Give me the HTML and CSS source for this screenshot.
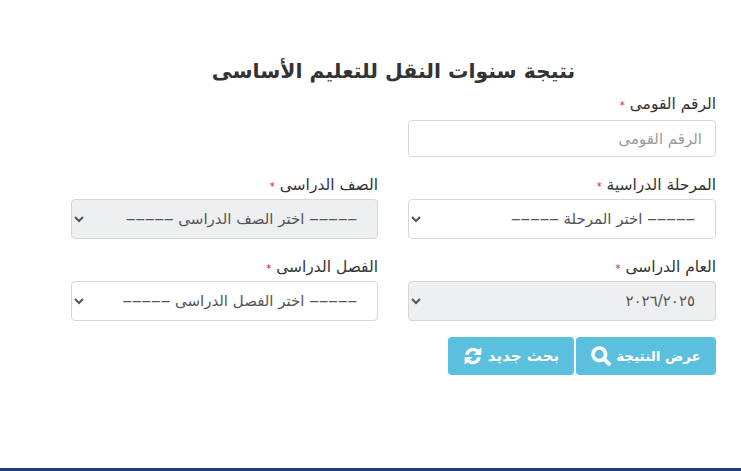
FILE: index.html
```html
<!DOCTYPE html>
<html lang="ar" dir="rtl">
<head>
<meta charset="utf-8">
<title>نتيجة سنوات النقل للتعليم الأساسى</title>
<link rel="stylesheet" href="styles.css">
</head>
<body>
<main class="page">
  <h1 class="title">نتيجة سنوات النقل للتعليم الأساسى</h1>
  <form class="form">
    <div class="field field-wide">
      <label class="label">الرقم القومى <span class="req">*</span></label>
      <input class="control input" type="text" placeholder="الرقم القومى">
    </div>
    <div class="field">
      <label class="label">المرحلة الدراسية <span class="req">*</span></label>
      <select class="control select"><option>‒‒‒‒‒ اختر المرحلة ‒‒‒‒‒</option></select>
    </div>
    <div class="field">
      <label class="label">الصف الدراسى <span class="req">*</span></label>
      <select class="control select" disabled><option>‒‒‒‒‒ اختر الصف الدراسى ‒‒‒‒‒</option></select>
    </div>
    <div class="field">
      <label class="label">العام الدراسى <span class="req">*</span></label>
      <select class="control select" disabled><option>٢٠٢٦/٢٠٢٥</option></select>
    </div>
    <div class="field">
      <label class="label">الفصل الدراسى <span class="req">*</span></label>
      <select class="control select"><option>‒‒‒‒‒ اختر الفصل الدراسى ‒‒‒‒‒</option></select>
    </div>
  </form>
  <div class="actions">
    <button class="btn btn-show" type="button">عرض النتيجة
      <svg class="icon" viewBox="0 0 24 24" aria-hidden="true"><circle cx="10" cy="10" r="7.6" fill="none" stroke="#fff" stroke-width="4.4"/><path d="M15.5 15.5 21.5 21.5" stroke="#fff" stroke-width="4.8" stroke-linecap="round"/></svg>
    </button>
    <button class="btn btn-new" type="button">بحث جديد
      <svg class="icon" viewBox="0 0 24 24" aria-hidden="true"><path d="M2.6 10.4A9.6 9.6 0 0 1 18.6 4.6L22 1.5V10.8H12.7L16 7.6A5.6 5.6 0 0 0 6.8 10.4Z" fill="#fff"/><path d="M21.4 13.6A9.6 9.6 0 0 1 5.4 19.4L2 22.5V13.2H11.3L8 16.4A5.6 5.6 0 0 0 17.2 13.6Z" fill="#fff"/></svg>
    </button>
  </div>
</main>
<footer class="footer"></footer>
</body>
</html>
```
FILE: styles.css
```css
* { box-sizing: border-box; }
html, body { margin: 0; height: 100%; }
body {
  display: flex;
  flex-direction: column;
  background: #fff;
  color: #333;
  font-family: "DejaVu Sans", "Noto Sans", sans-serif;
  overflow: hidden;
}
.page { flex: 1; padding: 59px 25px 0 71px; }
.title {
  margin: 0 0 14px;
  height: 24px;
  line-height: 24px;
  text-align: center;
  font-size: 20.4px;
  font-weight: 700;
  color: #333;
  white-space: nowrap;
}
.form {
  display: grid;
  grid-template-columns: 308px 307px;
  column-gap: 30px;
  row-gap: 21px;
}
.field { display: flex; flex-direction: column; min-width: 0; }
.field-wide { grid-column: 1 / -1; width: 308px; }
.label {
  height: 15px;
  line-height: 15px;
  margin-bottom: 6px;
  font-size: 15.5px;
  color: #333;
  white-space: nowrap;
}
.field-wide .label { margin-bottom: 8px; }
.req { color: #c9193a; font-size: 10px; }
.control {
  width: 100%;
  border: 1px solid #d5d7d9;
  border-radius: 4px;
  background-color: #fff;
  font-family: inherit;
  font-size: 15px;
  color: #555;
}
.input { height: 37px; padding: 0 13px; }
.input::placeholder { color: #9a9a9a; }
.select { height: 40px; padding: 0 16px 0 4px; }
.select:disabled { background-color: #eeeff0; opacity: 1; color: #555; }
.actions { display: flex; gap: 2px; margin-top: 16px; }
.btn {
  display: flex;
  align-items: center;
  justify-content: center;
  gap: 5px;
  height: 38px;
  border: 0;
  border-radius: 4px;
  background: #5bc0de;
  color: #fff;
  font-family: inherit;
  font-size: 13.5px;
  font-weight: 700;
  white-space: nowrap;
  padding: 0;
}
.btn-show { width: 140px; }
.btn-new { width: 126px; font-size: 15px; }
.icon { width: 20px; height: 20px; flex: none; }
.footer { height: 3px; background: #1f3a7d; flex: none; }
```
